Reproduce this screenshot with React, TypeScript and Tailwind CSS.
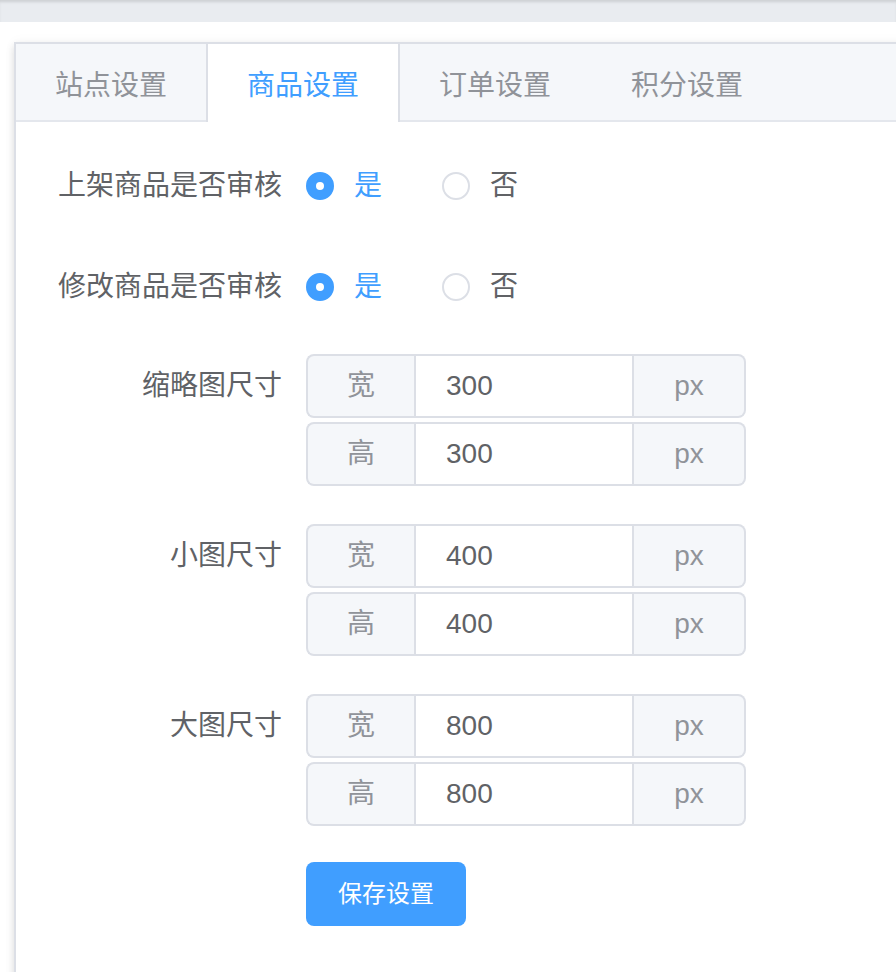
import React from "react";

const FONT = {
  fontFamily: '"Liberation Sans", "Noto Sans CJK SC", sans-serif',
};

function Radio({ checked, label }: { checked: boolean; label: string }) {
  return (
    <div className="flex items-center mr-[60px]">
      {checked ? (
        <span className="w-[28px] h-[28px] rounded-full bg-[#409eff] border-2 border-[#409eff] flex items-center justify-center">
          <span className="w-[8px] h-[8px] rounded-full bg-white" />
        </span>
      ) : (
        <span className="w-[28px] h-[28px] rounded-full bg-white border-2 border-[#dcdfe6]" />
      )}
      <span
        className={
          "pl-[20px] text-[28px] leading-[28px] " +
          (checked ? "text-[#409eff]" : "text-[#606266]")
        }
      >
        {label}
      </span>
    </div>
  );
}

function RadioRow({ label }: { label: string }) {
  return (
    <div className="flex pt-[2px] mb-[35px]">
      <div className="w-[260px] pr-[24px] text-right text-[28px] leading-[64px] h-[64px] text-[#606266]">
        {label}
      </div>
      <div className="flex items-center h-[64px]">
        <Radio checked label="是" />
        <Radio checked={false} label="否" />
      </div>
    </div>
  );
}

function SizeInput({ prefix, value }: { prefix: string; value: string }) {
  return (
    <div className="flex w-[440px] h-[64px] text-[28px]">
      <div className="w-[108px] h-full flex items-center justify-center bg-[#f5f7fa] border-2 border-r-0 border-[#dcdfe6] rounded-l-[8px] text-[#909399]">
        {prefix}
      </div>
      <div className="flex-1 h-full flex items-center pl-[30px] border-2 border-[#dcdfe6] text-[#606266]">
        {value}
      </div>
      <div className="w-[112px] h-full flex items-center justify-center bg-[#f5f7fa] border-2 border-l-0 border-[#dcdfe6] rounded-r-[8px] text-[#909399]">
        px
      </div>
    </div>
  );
}

function SizeRow({ label, value }: { label: string; value: string }) {
  return (
    <div className="flex mb-[38px]">
      <div className="w-[260px] pr-[24px] text-right text-[28px] leading-[64px] h-[64px] text-[#606266]">
        {label}
      </div>
      <div className="flex flex-col gap-[4px]">
        <SizeInput prefix="宽" value={value} />
        <SizeInput prefix="高" value={value} />
      </div>
    </div>
  );
}

export default function App() {
  const tabs = ["站点设置", "商品设置", "订单设置", "积分设置"];
  return (
    <div className="w-[896px] h-[972px] overflow-hidden bg-white" style={FONT}>
      <div className="h-[22px] bg-[#e9ecf0] shadow-[inset_0_3px_3px_-1px_rgba(0,0,0,0.12)]" />
      <div className="pt-[20px] pl-[14px]">
        <div className="w-[920px] border-2 border-[#dcdfe6] bg-white shadow-[0_4px_8px_0_rgba(0,0,0,0.12),0_0_12px_0_rgba(0,0,0,0.04)]">
          <div className="flex bg-[#f5f7fa] border-b-2 border-[#e4e7ed]">
            {tabs.map((t, i) => (
              <div
                key={t}
                className={
                  "h-[78px] -mb-[2px] -ml-[2px] pt-[5px] px-[39px] border-x-2 flex items-center text-[28px] " +
                  (i === 1
                    ? "bg-white border-[#dcdfe6] text-[#409eff]"
                    : "border-transparent text-[#909399]")
                }
              >
                {t}
              </div>
            ))}
          </div>
          <div className="pt-[30px] pl-[30px] pb-[200px]">
            <RadioRow label="上架商品是否审核" />
            <RadioRow label="修改商品是否审核" />
            <SizeRow label="缩略图尺寸" value="300" />
            <SizeRow label="小图尺寸" value="400" />
            <SizeRow label="大图尺寸" value="800" />
            <div className="flex">
              <div className="w-[260px]" />
              <button className="w-[160px] h-[64px] rounded-[8px] bg-[#409eff] text-white text-[24px] -mt-[2px]">
                保存设置
              </button>
            </div>
          </div>
        </div>
      </div>
    </div>
  );
}
